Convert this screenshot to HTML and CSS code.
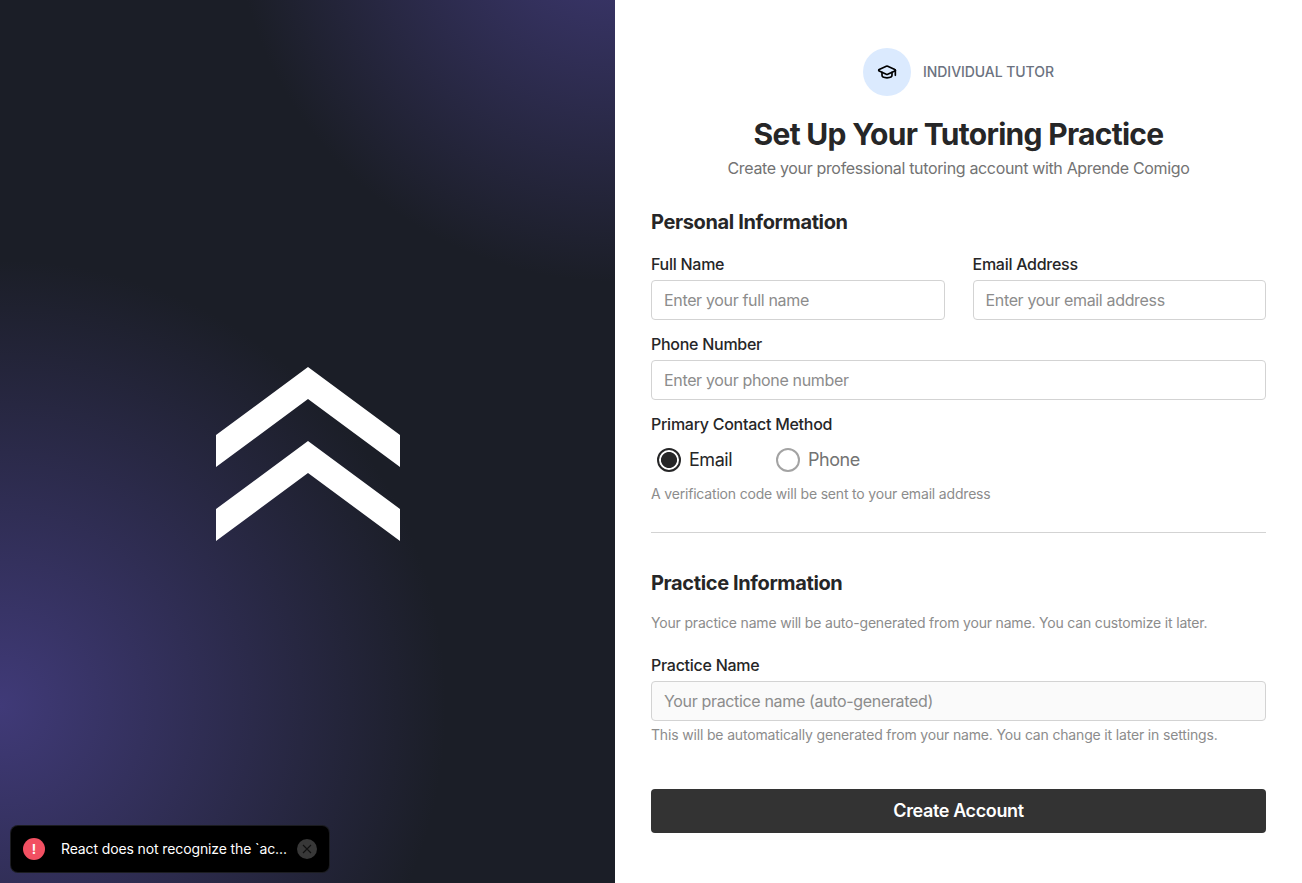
FILE: index.html
```html
<!DOCTYPE html>
<html lang="en">
<head>
<meta charset="utf-8">
<title>Set Up Your Tutoring Practice</title>
<link rel="stylesheet" href="styles.css">
</head>
<body>
<div class="page">
  <aside class="brand">
    <svg class="brand-logo" width="184" height="174" viewBox="0 0 184 174" fill="#fff">
      <path d="M92 0 184 68V100L92 32 0 100V68Z"/>
      <path d="M92 74 184 142V174L92 106 0 174V142Z"/>
    </svg>
  </aside>
  <main class="content">
    <div class="role">
      <span class="role-icon">
        <svg width="20" height="20" viewBox="0 0 24 24" fill="none" stroke="#000" stroke-width="2" stroke-linecap="round" stroke-linejoin="round">
          <path d="M21.42 10.922a1 1 0 0 0-.019-1.838L12.83 5.18a2 2 0 0 0-1.66 0L2.6 9.08a1 1 0 0 0 0 1.832l8.57 3.908a2 2 0 0 0 1.66 0z"/>
          <path d="M22 10v6"/><path d="M6 12.5V16a6 3 0 0 0 12 0v-3.5"/>
        </svg>
      </span>
      <span class="role-label">INDIVIDUAL TUTOR</span>
    </div>
    <h1 class="title"><span>Set Up Your Tutoring Practice</span></h1>
    <p class="subtitle"><span>Create your professional tutoring account with Aprende Comigo</span></p>

    <h2 class="section-title personal">Personal Information</h2>
    <div class="row">
      <div class="field"><label class="label" for="name">Full Name</label><input class="input" id="name" placeholder="Enter your full name"></div>
      <div class="field"><label class="label" for="email">Email Address</label><input class="input" id="email" placeholder="Enter your email address"></div>
    </div>
    <div class="field"><label class="label" for="phone">Phone Number</label><input class="input" id="phone" placeholder="Enter your phone number"></div>
    <div class="label">Primary Contact Method</div>
    <div class="radios">
      <span class="radio checked"><i class="dot"></i><span class="radio-text">Email</span></span>
      <span class="radio"><i class="dot"></i><span class="radio-text">Phone</span></span>
    </div>
    <p class="hint">A verification code will be sent to your email address</p>
    <hr class="divider">
    <h2 class="section-title">Practice Information</h2>
    <p class="hint practice-note">Your practice name will be auto-generated from your name. You can customize it later.</p>
    <label class="label" for="practice">Practice Name</label>
    <input class="input muted" id="practice" placeholder="Your practice name (auto-generated)" readonly>
    <p class="hint practice-help">This will be automatically generated from your name. You can change it later in settings.</p>
    <button class="submit"><span>Create Account</span></button>
  </main>
</div>
<div class="toast">
  <span class="toast-icon">!</span>
  <span class="toast-text">React does not recognize the `ac...</span>
  <span class="toast-close"><svg width="10" height="10" viewBox="0 0 10 10" stroke="#111" stroke-width="1.1"><path d="M1 1 9 9M9 1 1 9"/></svg></span>
</div>
</body>
</html>
```
FILE: styles.css
```css
* { box-sizing: border-box; margin: 0; padding: 0; }
body { font-family: Inter, "Liberation Sans", sans-serif; color: #262627; background: #fff; overflow: hidden; }
.page { display: flex; height: 883px; }
.brand {
  width: 615px; display: flex; justify-content: center; align-items: center; padding: 25px 0 0 1px;
  background:
    radial-gradient(circle 446px at 0 706px, #403a78, rgba(64, 58, 120, 0)),
    radial-gradient(circle 382px at 615px -100px, #403a78, rgba(64, 58, 120, 0)),
    #1b1e27;
}
.content { flex: 1; padding: 48px 36px 0; }
.role { display: flex; justify-content: center; align-items: center; gap: 12px; height: 48px; }
.role-icon { width: 48px; height: 48px; border-radius: 50%; background: #dbeafe; display: flex; align-items: center; justify-content: center; }
.role-label { padding-bottom: 2px; font-size: 14px; font-weight: 500; letter-spacing: -0.06px; color: #6b7280; }
.title { margin-top: 19px; text-align: center; font-size: 30px; line-height: 38px; font-weight: 700; letter-spacing: -0.71px; white-space: nowrap; }
.subtitle { margin-top: 3px; text-align: center; font-size: 16px; line-height: 24px; letter-spacing: -0.34px; color: #737373; white-space: nowrap; }
.section-title { font-size: 20px; line-height: 26px; font-weight: 700; letter-spacing: -0.37px; }
.personal { margin-top: 29px; }
.row { display: grid; grid-template-columns: 1fr 1fr; gap: 28px; margin-top: 17px; }
.field { margin-bottom: 12px; }
.label { display: block; font-size: 16px; line-height: 24px; font-weight: 500; letter-spacing: -0.27px; margin-bottom: 4px; }
.input { display: block; width: 100%; height: 40px; padding: 0 12px; border: 1px solid #d3d3d3; border-radius: 4px; background: #fff; font: 400 16px Inter, sans-serif; letter-spacing: -0.34px; }
.input::placeholder { color: #8c8c8c; opacity: 1; }
.input.muted { background: #fafafa; }
.radios { display: flex; gap: 44px; height: 24px; margin: 12px 0 0 6px; }
.radio { display: flex; align-items: center; gap: 8px; font-size: 18px; letter-spacing: -0.48px; color: #737373; }
.radio-text { padding-bottom: 2px; }
.radio.checked { color: #262627; }
.dot { width: 24px; height: 24px; border: 2px solid #a3a3a3; border-radius: 50%; }
.checked .dot { border-color: #262627; background: radial-gradient(circle, #262627 7.6px, #fff 8.4px); }
.hint { font-size: 14px; line-height: 20px; letter-spacing: -0.18px; color: #8c8c8c; white-space: nowrap; }
.radios + .hint { margin-top: 12px; }
.divider { border: 0; border-top: 1px solid #d3d3d3; margin: 28px 0 37px; }
.practice-note { margin: 17px 0 20px; }
.practice-help { margin-top: 4px; letter-spacing: -0.165px; }
.submit { display: block; width: 100%; height: 44px; margin-top: 44px; padding-bottom: 2px; border: 0; border-radius: 4px; background: #333; color: #fff; font: 600 18px Inter, sans-serif; letter-spacing: -0.38px; }
.toast { position: absolute; left: 11px; top: 826px; width: 318px; height: 46px; border-radius: 7px; background: #000; display: flex; align-items: center; padding: 0 12px; color: #fff; box-shadow: 0 0 0 1px #1b1c20; }
.toast-icon { width: 22px; height: 22px; border-radius: 50%; background: #f25062; display: flex; align-items: center; justify-content: center; font-size: 13px; font-weight: 700; }
.toast-text { margin-left: 16px; padding-bottom: 2px; font-size: 14px; white-space: nowrap; letter-spacing: -0.12px; }
.toast-close { width: 20px; height: 20px; margin-left: auto; border-radius: 50%; background: #383838; display: flex; align-items: center; justify-content: center; }
```
